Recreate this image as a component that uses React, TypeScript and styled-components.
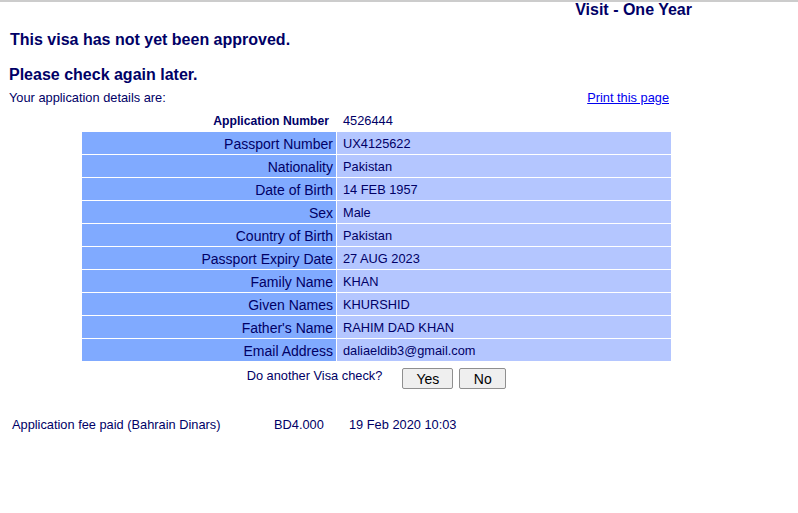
import React from "react";
import styled, { createGlobalStyle } from "styled-components";

const GlobalStyle = createGlobalStyle`
  html, body {
    margin: 0;
    padding: 0;
    background: #ffffff;
  }
  body {
    font-family: "Liberation Sans", Arial, sans-serif;
    color: #000066;
  }
`;

const TopRule = styled.div`
  height: 2px;
  background: #cccccc;
`;

const Header = styled.div`
  width: 692px;
  display: flex;
  justify-content: flex-end;
`;

const HeaderTitle = styled.h1`
  margin: 0;
  font-size: 16px;
  line-height: 16px;
  font-weight: bold;
  color: #000066;
`;

const Main = styled.div`
  padding-left: 9px;
`;

const Title = styled.h2<{ $mt: number; $indent?: number }>`
  margin: ${(p) => p.$mt}px 0 0 ${(p) => p.$indent ?? 0}px;
  font-size: 16px;
  line-height: 18px;
  font-weight: bold;
  color: #000066;
`;

const IntroRow = styled.div`
  width: 660px;
  margin-top: 6px;
  display: flex;
  justify-content: space-between;
  font-size: 12.8px;
  line-height: 15px;
`;

const PrintLink = styled.a`
  color: #0000ee;
  text-decoration: underline;
`;

const DetailsTable = styled.table`
  margin: 3px 0 0 72px;
  width: 591px;
  border-collapse: separate;
  border-spacing: 1px;
  table-layout: fixed;
`;

const LabelCol = styled.col`
  width: 254px;
`;

const Label = styled.td<{ $plain?: boolean }>`
  height: 21px;
  padding: 1px ${(p) => (p.$plain ? "7px" : "3px")} 0 0;
  text-align: right;
  vertical-align: middle;
  background: ${(p) => (p.$plain ? "transparent" : "#80aaff")};
  font-size: ${(p) => (p.$plain ? "12.2px" : "14px")};
  font-weight: ${(p) => (p.$plain ? "bold" : "normal")};
  color: #000066;
  white-space: nowrap;
`;

const Value = styled.td<{ $plain?: boolean }>`
  height: 21px;
  padding: 1px 0 0 6px;
  vertical-align: middle;
  background: ${(p) => (p.$plain ? "transparent" : "#b4c6ff")};
  font-size: 12.8px;
  color: #000066;
  white-space: nowrap;
`;

const CheckRow = styled.div`
  width: 591px;
  margin: 6px 0 0 72px;
  display: flex;
  justify-content: center;
  align-items: flex-start;
  gap: 6px;
`;

const CheckLabel = styled.span`
  font-size: 12.8px;
  line-height: 15px;
  margin-right: 14px;
`;

const Button = styled.button<{ $w: number }>`
  width: ${(p) => p.$w}px;
  height: 21px;
  padding: 0;
  box-sizing: border-box;
  border: 1px solid #8f8f8f;
  border-radius: 2px;
  background: #efefef;
  font-family: "Liberation Sans", Arial, sans-serif;
  font-size: 14px;
  color: #000000;
`;

const FeeRow = styled.div`
  margin-top: 28px;
  padding-left: 3px;
  display: grid;
  grid-template-columns: 262px 75px auto;
  font-size: 12.8px;
  line-height: 15px;
`;

const rows: [string, string][] = [
  ["Passport Number", "UX4125622"],
  ["Nationality", "Pakistan"],
  ["Date of Birth", "14 FEB 1957"],
  ["Sex", "Male"],
  ["Country of Birth", "Pakistan"],
  ["Passport Expiry Date", "27 AUG 2023"],
  ["Family Name", "KHAN"],
  ["Given Names", "KHURSHID"],
  ["Father's Name", "RAHIM DAD KHAN"],
  ["Email Address", "daliaeldib3@gmail.com"],
];

export default function App() {
  return (
    <>
      <GlobalStyle />
      <TopRule />
      <Header>
        <HeaderTitle>Visit - One Year</HeaderTitle>
      </Header>
      <Main>
        <Title $mt={13} $indent={1}>This visa has not yet been approved.</Title>
        <Title $mt={17}>Please check again later.</Title>
        <IntroRow>
          <span>Your application details are:</span>
          <PrintLink href="#">Print this page</PrintLink>
        </IntroRow>
        <DetailsTable>
          <colgroup>
            <LabelCol />
            <col />
          </colgroup>
          <tbody>
            <tr>
              <Label $plain>Application Number</Label>
              <Value $plain>4526444</Value>
            </tr>
            {rows.map(([k, v]) => (
              <tr key={k}>
                <Label>{k}</Label>
                <Value>{v}</Value>
              </tr>
            ))}
          </tbody>
        </DetailsTable>
        <CheckRow>
          <CheckLabel>Do another Visa check?</CheckLabel>
          <Button $w={51}>Yes</Button>
          <Button $w={47}>No</Button>
        </CheckRow>
        <FeeRow>
          <span>Application fee paid (Bahrain Dinars)</span>
          <span>BD4.000</span>
          <span>19 Feb 2020 10:03</span>
        </FeeRow>
      </Main>
    </>
  );
}
